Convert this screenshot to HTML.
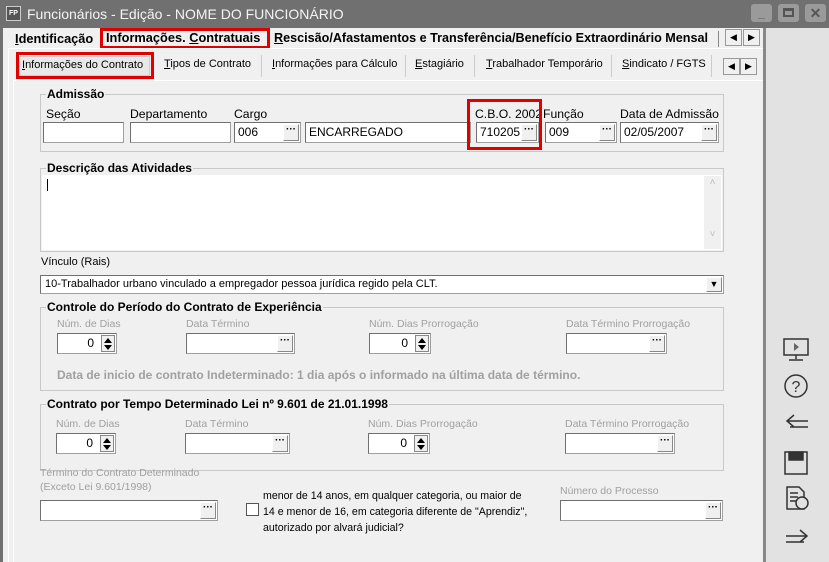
<!DOCTYPE html>
<html><head><meta charset="utf-8"><style>
*{box-sizing:border-box;margin:0;padding:0}
body{width:829px;height:562px;overflow:hidden;background:#f0f0f0;font-family:"Liberation Sans",sans-serif;font-size:12px;color:#000;position:relative}
.a{position:absolute;white-space:nowrap}
.inp{position:absolute;background:#fff;border:1px solid #a0a0a0;border-top-color:#707070;border-left-color:#707070;height:21px;font-size:12px;padding:3px 3px;line-height:13px}
.btn{position:absolute;top:1px;right:1px;width:16px;height:17px;background:#f0f0f0;border:1px solid #888;border-top-color:#fff;border-left-color:#fff;font-size:10px;font-weight:bold;text-align:center;line-height:10px}
.grp{position:absolute;border:1px solid #c8c8c8}
.gl{position:absolute;top:-8px;left:6px;background:#f0f0f0;font-weight:bold;font-size:12px;padding:0 1px}
.g{color:#a0a0a0;font-size:10.5px}
.sp{position:absolute;right:1px;top:1px;width:14px;height:17px;border:1px solid #888;background:#f0f0f0}
.sp:before{content:"";position:absolute;left:2px;top:2px;border:4px solid transparent;border-bottom:5px solid #000;border-top:0}
.sp:after{content:"";position:absolute;left:2px;top:9px;border:4px solid transparent;border-top:5px solid #000;border-bottom:0}
.arr{position:absolute;width:17px;height:17px;background:#f0f0f0;border:1px solid #999;font-size:9px;text-align:center;line-height:15px}
.red{position:absolute;border:3px solid #e00000}
.u{text-decoration:underline}
.st{font-size:11px}
.lb{font-size:12.2px}
</style></head><body>
<div class="a" style="left:0;top:0;width:829px;height:28px;background:#707070"></div>
<div class="a" style="left:6px;top:6px;width:15px;height:15px;background:#555;border:1px solid #ccc;color:#fff;font-size:7px;font-weight:bold;text-align:center;line-height:13px">FP</div>
<div class="a" style="left:27px;top:6px;color:#f4f4f4;font-size:14px">Funcionários - Edição - NOME DO FUNCIONÁRIO</div>
<div class="a" style="left:751px;top:4px;width:21px;height:18px;background:#9a9a9a;border-radius:3px;color:#555;text-align:center;font-weight:bold;line-height:18px">_</div>
<div class="a" style="left:778px;top:4px;width:21px;height:18px;background:#9a9a9a;border-radius:3px"><div class="a" style="left:5px;top:4px;width:11px;height:9px;border:2px solid #555;border-top-width:3px"></div></div>
<div class="a" style="left:805px;top:4px;width:21px;height:18px;background:#9a9a9a;border-radius:3px;color:#555;text-align:center;font-weight:bold;font-size:14px;line-height:18px">✕</div>
<div class="a" style="left:0;top:28px;width:3px;height:534px;background:#707070"></div>
<div class="a" style="left:763px;top:28px;width:3px;height:534px;background:#888"></div>
<div class="a" style="left:766px;top:28px;width:63px;height:534px;background:#e2e2e2"></div>
<div class="a" style="left:15px;top:31px;font-weight:bold;font-size:12.8px"><span class="u">I</span>dentificação</div>
<div class="a" style="left:106px;top:30px;font-weight:bold;font-size:12.8px">Informações. <span class="u">C</span>ontratuais</div>
<div class="red" style="left:100px;top:28px;width:170px;height:21px"></div>
<div class="a" style="left:274px;top:31px;font-weight:bold;font-size:12.6px"><span class="u">R</span>escisão/Afastamentos e Transferência/Benefício Extraordinário Mensal</div>
<div class="a" style="left:718px;top:31px;width:4px;height:16px;border-left:1px solid #888"></div>
<div class="arr" style="left:725px;top:29px">◀</div><div class="arr" style="left:743px;top:29px">▶</div>
<div class="a" style="left:8px;top:48px;width:755px;height:514px;border-top:1px solid #fff;border-left:1px solid #fff"></div>
<div class="a" style="left:19px;top:56px;width:131px;height:20px;background:#e8e8e8;border:1px solid #ccc"></div>
<div class="a st" style="left:22px;top:59px"><span class="u">I</span>nformações do Contrato</div>
<div class="red" style="left:16px;top:52px;width:138px;height:27px"></div>
<div class="a st" style="left:164px;top:58px"><span class="u">T</span>ipos de Contrato</div>
<div class="a" style="left:261px;top:55px;height:22px;border-left:1px solid #ccc"></div>
<div class="a st" style="left:272px;top:58px"><span class="u">I</span>nformações para Cálculo</div>
<div class="a" style="left:405px;top:55px;height:22px;border-left:1px solid #ccc"></div>
<div class="a st" style="left:415px;top:58px"><span class="u">E</span>stagiário</div>
<div class="a" style="left:474px;top:55px;height:22px;border-left:1px solid #ccc"></div>
<div class="a st" style="left:486px;top:58px"><span class="u">T</span>rabalhador Temporário</div>
<div class="a" style="left:611px;top:55px;height:22px;border-left:1px solid #ccc"></div>
<div class="a st" style="left:622px;top:58px"><span class="u">S</span>indicato / FGTS</div>
<div class="a" style="left:711px;top:55px;height:22px;border-left:1px solid #ccc"></div>
<div class="arr" style="left:723px;top:58px">◀</div><div class="arr" style="left:740px;top:58px">▶</div>
<div class="a" style="left:13px;top:80px;width:750px;height:482px;border-top:1px solid #fff;border-left:1px solid #fff"></div>
<div class="grp" style="left:40px;top:94px;width:684px;height:58px"><div class="gl" style="left:5px">Admissão</div></div>
<div class="a lb" style="left:46px;top:107px">Seção</div>
<div class="a lb" style="left:130px;top:107px">Departamento</div>
<div class="a lb" style="left:234px;top:107px">Cargo</div>
<div class="a lb" style="left:475px;top:107px">C.B.O. 2002</div>
<div class="a lb" style="left:543px;top:107px">Função</div>
<div class="a lb" style="left:620px;top:107px">Data de Admissão</div>
<div class="inp" style="left:43px;top:122px;width:81px"></div>
<div class="inp" style="left:130px;top:122px;width:101px"></div>
<div class="inp" style="left:234px;top:122px;width:67px">006<div class="btn">···</div></div>
<div class="inp" style="left:305px;top:122px;width:166px">ENCARREGADO</div>
<div class="inp" style="left:476px;top:122px;width:63px">710205<div class="btn">···</div></div>
<div class="inp" style="left:545px;top:122px;width:72px">009<div class="btn">···</div></div>
<div class="inp" style="left:620px;top:122px;width:99px">02/05/2007<div class="btn">···</div></div>
<div class="red" style="left:467px;top:99px;width:75px;height:51px"></div>
<div class="grp" style="left:40px;top:168px;width:684px;height:84px"><div class="gl" style="left:5px">Descrição das Atividades</div></div>
<div class="inp" style="left:42px;top:175px;width:680px;height:75px;border-color:#fff"><div class="a" style="left:4px;top:3px;height:12px;border-left:1px solid #000"></div><div class="a" style="right:0;top:0;width:17px;height:73px;background:#f0f0f0;color:#bbb;font-size:10px;text-align:center">˄<br><br><br><br>˅</div></div>
<div class="a" style="left:41px;top:256px;font-size:11px">Vínculo (Rais)</div>
<div class="inp" style="left:40px;top:275px;width:684px;height:19px;padding:2px 4px;font-size:11px">10-Trabalhador urbano vinculado a empregador pessoa jurídica regido pela CLT.<div class="btn" style="height:15px;line-height:13px;font-size:9px">▼</div></div>
<div class="grp" style="left:40px;top:307px;width:684px;height:84px"><div class="gl" style="left:5px">Controle do Período do Contrato de Experiência</div></div>
<div class="a g" style="left:57px;top:318px">Núm. de Dias</div>
<div class="a g" style="left:186px;top:318px">Data Término</div>
<div class="a g" style="left:369px;top:318px">Núm. Dias Prorrogação</div>
<div class="a g" style="left:566px;top:318px">Data Término Prorrogação</div>
<div class="inp" style="left:57px;top:333px;width:60px;text-align:right;padding-right:22px">0<div class="sp"></div></div>
<div class="inp" style="left:186px;top:333px;width:109px"><div class="btn">···</div></div>
<div class="inp" style="left:369px;top:333px;width:62px;text-align:right;padding-right:22px">0<div class="sp"></div></div>
<div class="inp" style="left:566px;top:333px;width:101px"><div class="btn">···</div></div>
<div class="a g" style="left:57px;top:368px;font-weight:bold;font-size:12px">Data de inicio de contrato Indeterminado: 1 dia após o informado na última data de término.</div>
<div class="grp" style="left:40px;top:404px;width:684px;height:67px"><div class="gl" style="left:5px">Contrato por Tempo Determinado Lei nº 9.601 de 21.01.1998</div></div>
<div class="a g" style="left:56px;top:418px">Núm. de Dias</div>
<div class="a g" style="left:185px;top:418px">Data Término</div>
<div class="a g" style="left:368px;top:418px">Núm. Dias Prorrogação</div>
<div class="a g" style="left:565px;top:418px">Data Término Prorrogação</div>
<div class="inp" style="left:56px;top:433px;width:60px;text-align:right;padding-right:22px">0<div class="sp"></div></div>
<div class="inp" style="left:185px;top:433px;width:105px"><div class="btn">···</div></div>
<div class="inp" style="left:368px;top:433px;width:62px;text-align:right;padding-right:22px">0<div class="sp"></div></div>
<div class="inp" style="left:565px;top:433px;width:110px"><div class="btn">···</div></div>
<div class="a g" style="left:40px;top:466px;line-height:14px">Término do Contrato Determinado<br>(Exceto Lei 9.601/1998)</div>
<div class="inp" style="left:40px;top:500px;width:178px"><div class="btn">···</div></div>
<div class="a" style="left:246px;top:503px;width:13px;height:13px;background:#fff;border:1px solid #555"></div>
<div class="a" style="left:263px;top:488px;line-height:16px;font-size:10.6px">menor de 14 anos, em qualquer categoria, ou maior de<br>14 e menor de 16, em categoria diferente de "Aprendiz",<br>autorizado por alvará judicial?</div>
<div class="a g" style="left:560px;top:485px">Número do Processo</div>
<div class="inp" style="left:560px;top:500px;width:163px"><div class="btn">···</div></div>
<svg class="a" style="left:780px;top:335px" width="34" height="215" viewBox="0 0 34 215" fill="none" stroke="#333" stroke-width="1.5">
<rect x="4" y="4" width="24" height="16"/><line x1="16" y1="20" x2="16" y2="24"/><line x1="9" y1="25" x2="23" y2="25"/><path d="M14 8l5 4-5 4z" fill="#666" stroke="none"/>
<circle cx="16" cy="51" r="11"/><text x="16" y="57" font-size="16" text-anchor="middle" fill="#333" stroke="none" font-family="Liberation Sans">?</text>
<path d="M28 86H8M14 80l-7 6 7 6M28 92H10" />
<rect x="5" y="117" width="22" height="22"/><rect x="9" y="117" width="14" height="8" fill="#333"/>
<path d="M7 152h12l5 5v17H7z"/><path d="M10 158h8M10 162h8M10 166h6"/><circle cx="22" cy="168" r="6" fill="#e2e2e2"/>
<path d="M6 201h20M20 195l7 6-7 6M6 207h18"/>
</svg>
</body></html>
